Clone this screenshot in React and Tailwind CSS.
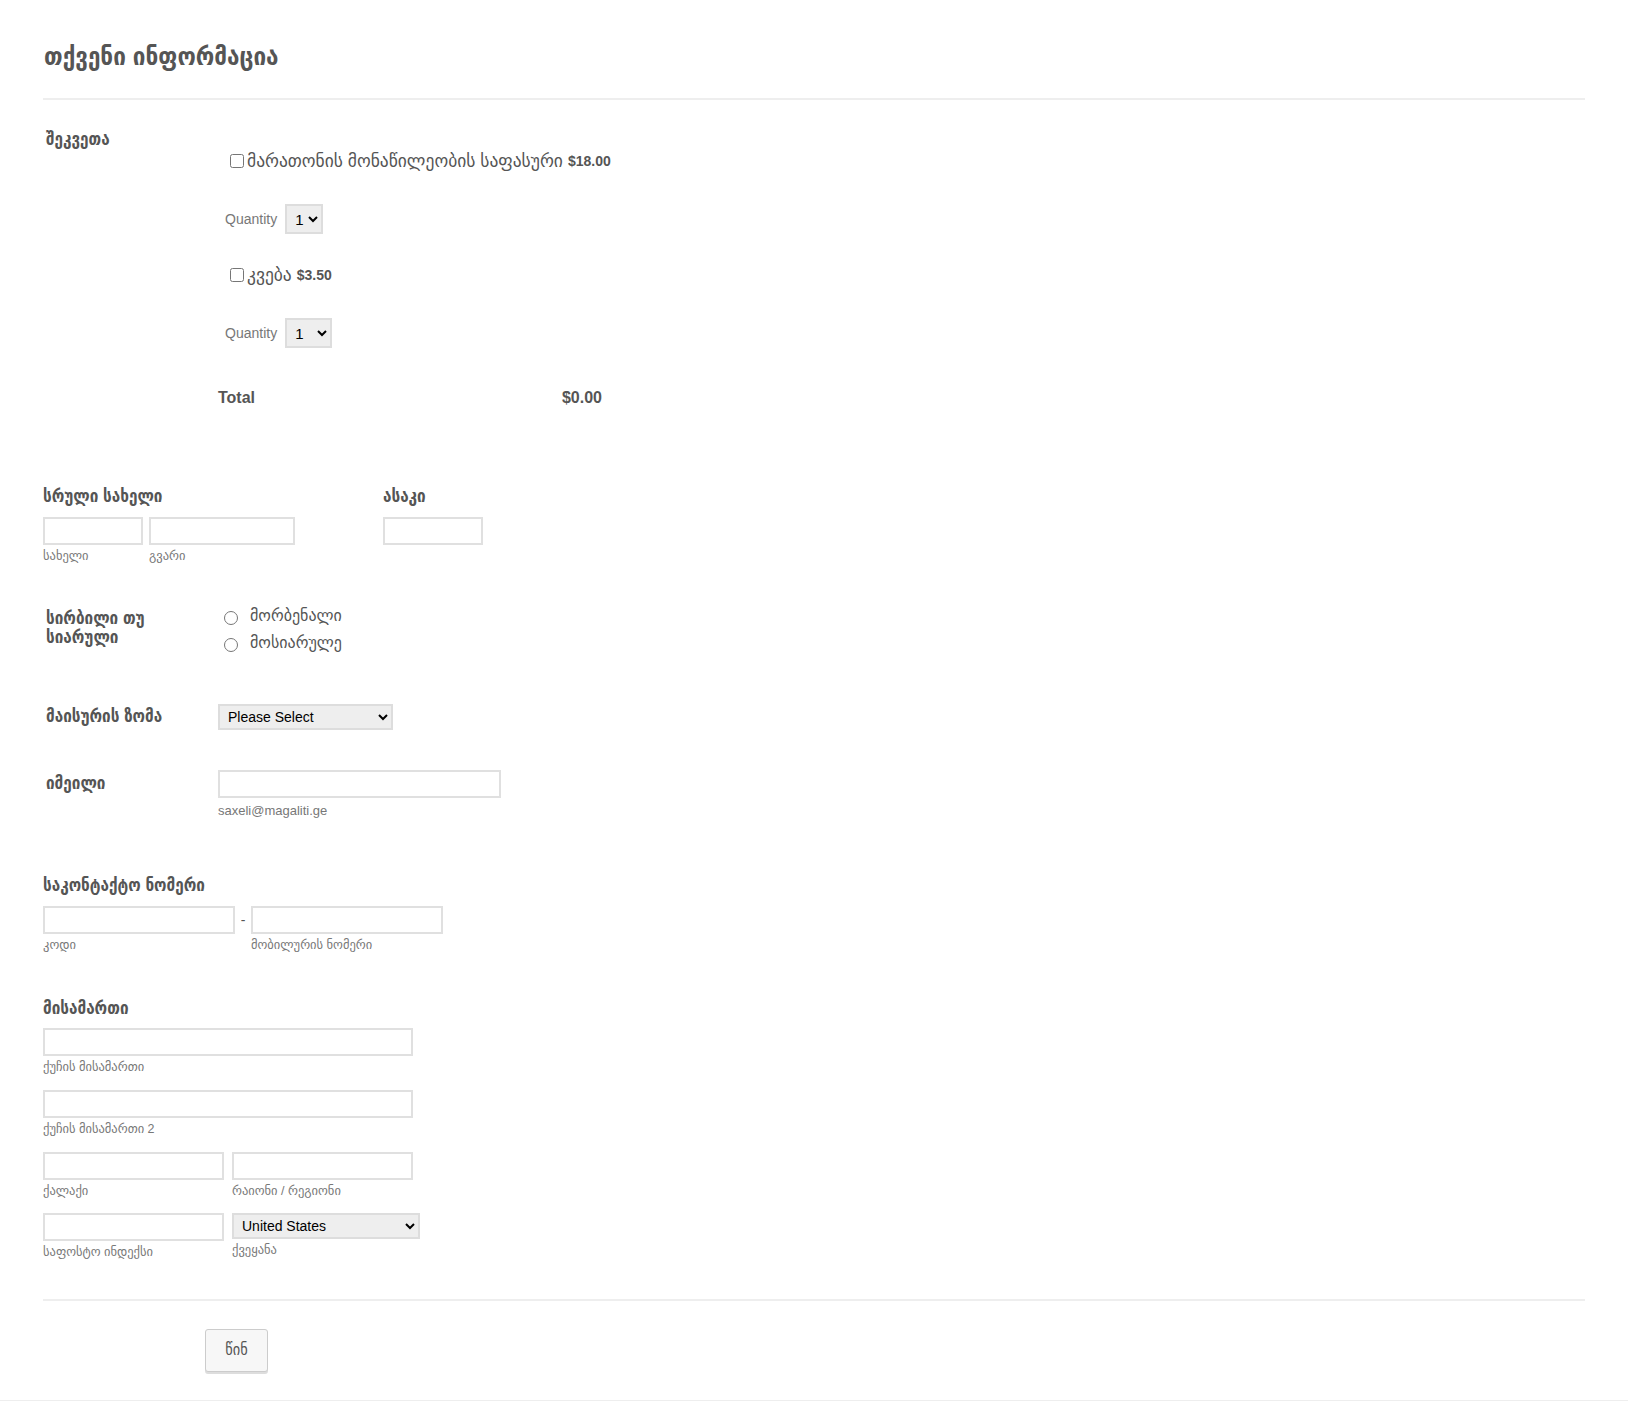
import { useState } from 'react'

const FONT = { fontFamily: '"Liberation Sans", "DejaVu Sans Condensed", "DejaVu Sans", sans-serif' }
const PLAIN = { fontFamily: '"Liberation Sans", "DejaVu Sans", sans-serif' }

function Sub({ children, className = '' }) {
  return (
    <div className={'text-[12.5px] text-[#777] leading-[16px] mt-[3px] ' + className} style={PLAIN}>
      {children}
    </div>
  )
}

function TextBox({ className = '' }) {
  return <input type="text" className={'h-[28px] border-2 border-[#e0e0e0] bg-white outline-none ' + className} />
}

function Product({ name, price, qtyWidth }) {
  return (
    <div>
      <label className="flex items-center ml-[12px] text-[17.5px] text-[#555] leading-[24px]" style={PLAIN}>
        <input type="checkbox" className="w-[14px] h-[14px] mr-[3px]" />
        <span>{name}</span>
        <span className="ml-[5px] text-[14px] font-bold">{price}</span>
      </label>
      <div className="flex items-center mt-[31px] ml-[7px]">
        <span className="text-[14px] text-[#777] mr-[8px]">Quantity</span>
        <select className={'h-[30px] border-2 border-[#ddd] bg-[#eee] text-[15px] text-black pl-[4px] ' + qtyWidth}>
          <option>1</option>
        </select>
      </div>
    </div>
  )
}

export default function App() {
  const [radio, setRadio] = useState(null)

  return (
    <div className="min-h-screen bg-white border-b border-[#eee]" style={FONT}>
      <div className="pl-[43px] pr-[43px] pt-[38px]">
        <h1 className="text-[25px] font-bold text-[#555] leading-[36px] pl-[1px]">თქვენი ინფორმაცია</h1>
        <div className="mt-[24px] border-b-2 border-[#eee]" />

        {/* order */}
        <div className="flex mt-[28px]">
          <div className="w-[175px] shrink-0 pl-[3px] text-[17px] font-bold text-[#555] leading-[24px]">შეკვეთა</div>
          <div className="pt-[21px]">
            <Product name="მარათონის მონაწილეობის საფასური" price="$18.00" qtyWidth="w-[38px]" />
            <div className="mt-[29px]">
              <Product name="კვება" price="$3.50" qtyWidth="w-[47px]" />
            </div>
            <div className="flex items-center justify-between w-[384px] mt-[38px] text-[16px] font-bold text-[#555]">
              <span>Total</span>
              <span>$0.00</span>
            </div>
          </div>
        </div>

        {/* full name + age */}
        <div className="flex mt-[77px]">
          <div>
            <div className="text-[17px] font-bold text-[#555] leading-[20px]">სრული სახელი</div>
            <div className="flex gap-[6px] mt-[10px]">
              <div>
                <TextBox className="w-[100px]" />
                <Sub>სახელი</Sub>
              </div>
              <div>
                <TextBox className="w-[146px]" />
                <Sub>გვარი</Sub>
              </div>
            </div>
          </div>
          <div className="ml-[88px]">
            <div className="text-[17px] font-bold text-[#555] leading-[20px]">ასაკი</div>
            <TextBox className="w-[100px] mt-[10px]" />
          </div>
        </div>

        {/* run or walk */}
        <div className="flex mt-[40px]">
          <div className="w-[175px] shrink-0 pl-[3px] text-[17px] font-bold text-[#555] leading-[19px] pt-[5px]">
            სირბილი თუ<br />სიარული
          </div>
          <div className="flex flex-col gap-[7px] pl-[6px] pt-[2px]">
            {['მორბენალი', 'მოსიარულე'].map((o) => (
              <label key={o} className="flex items-center text-[16px] text-[#555] leading-[20px]" style={PLAIN}>
                <input
                  type="radio"
                  name="type"
                  checked={radio === o}
                  onChange={() => setRadio(o)}
                  className="w-[14px] h-[14px] mr-[12px] mt-[3px]"
                />
                {o}
              </label>
            ))}
          </div>
        </div>

        {/* shirt size */}
        <div className="flex items-center mt-[51px]">
          <div className="w-[175px] shrink-0 pl-[3px] text-[17px] font-bold text-[#555] leading-[24px]">მაისურის ზომა</div>
          <select className="w-[175px] h-[26px] border-2 border-[#ddd] bg-[#eee] text-[14px] text-black pl-[4px]">
            <option>Please Select</option>
          </select>
        </div>

        {/* email */}
        <div className="flex mt-[40px]">
          <div className="w-[175px] shrink-0 pl-[3px] text-[17px] font-bold text-[#555] leading-[24px] pt-[2px]">იმეილი</div>
          <div>
            <TextBox className="w-[283px]" />
            <div className="text-[13px] text-[#777] mt-[3px]">saxeli@magaliti.ge</div>
          </div>
        </div>

        {/* phone */}
        <div className="mt-[55px]">
          <div className="text-[17px] font-bold text-[#555] leading-[20px]">საკონტაქტო ნომერი</div>
          <div className="flex mt-[10px]">
            <div>
              <TextBox className="w-[192px]" />
              <Sub>კოდი</Sub>
            </div>
            <span className="w-[16px] text-center text-[14px] text-[#555] leading-[28px]">-</span>
            <div>
              <TextBox className="w-[192px]" />
              <Sub>მობილურის ნომერი</Sub>
            </div>
          </div>
        </div>

        {/* address */}
        <div className="mt-[46px] w-[377px]">
          <div className="text-[17px] font-bold text-[#555] leading-[20px]">მისამართი</div>
          <div className="mt-[9px]">
            <TextBox className="w-[370px]" />
            <Sub>ქუჩის მისამართი</Sub>
          </div>
          <div className="mt-[15px]">
            <TextBox className="w-[370px]" />
            <Sub>ქუჩის მისამართი 2</Sub>
          </div>
          <div className="flex gap-[8px] mt-[15px]">
            <div>
              <TextBox className="w-[181px]" />
              <Sub>ქალაქი</Sub>
            </div>
            <div>
              <TextBox className="w-[181px]" />
              <Sub>რაიონი / რეგიონი</Sub>
            </div>
          </div>
          <div className="flex gap-[8px] mt-[14px]">
            <div>
              <TextBox className="w-[181px]" />
              <Sub>საფოსტო ინდექსი</Sub>
            </div>
            <div>
              <select className="w-[188px] h-[26px] border-2 border-[#ddd] bg-[#eee] text-[14px] text-black pl-[4px]">
                <option>United States</option>
              </select>
              <Sub>ქვეყანა</Sub>
            </div>
          </div>
        </div>

        <div className="mt-[39px] border-b-2 border-[#eee]" />

        <div className="pt-[28px] pb-[23px] pl-[162px]">
          <button className="w-[63px] h-[43px] border border-[#ccc] rounded-[3px] bg-[#f7f7f7] text-[16px] text-[#555] shadow-[0_2px_0_#ddd]">
            წინ
          </button>
        </div>
      </div>
    </div>
  )
}
